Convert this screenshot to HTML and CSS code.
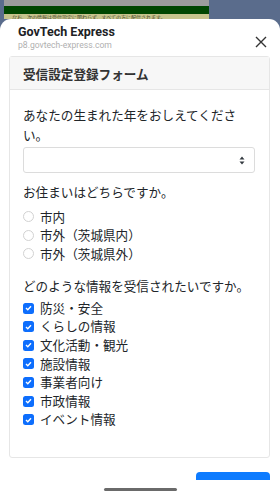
FILE: index.html
```html
<!DOCTYPE html>
<html lang="ja">
<head>
<meta charset="utf-8">
<link rel="stylesheet" href="styles.css">
</head>
<body>
<div class="screen">
  <div class="behind">
    <div class="page-strip">
      <div class="strip-gray"></div>
      <div class="strip-green"></div>
      <div class="strip-yellow"><span>なお、次の情報は受信設定に関わらず、すべての方に配信されます。</span></div>
    </div>
  </div>
  <div class="sheet">
    <div class="sheet-content">
      <div class="sheet-header">
        <div class="site">
          <div class="site-name">GovTech Express</div>
          <div class="site-url">p8.govtech-express.com</div>
        </div>
        <svg class="close" width="12" height="12" viewBox="0 0 12 12"><path d="M1 1L11 11M11 1L1 11" stroke="#333" stroke-width="1.4" fill="none"/></svg>
      </div>
      <div class="card">
        <div class="card-header">受信設定登録フォーム</div>
        <div class="card-body">
          <div class="q">あなたの生まれた年をおしえてください。</div>
          <div class="select">
            <svg width="6" height="9" viewBox="0 0 6 9"><path d="M3 0.5L5.5 3.5H0.5Z M3 8.5L5.5 5.5H0.5Z" fill="#343a40"/></svg>
          </div>
          <div class="q q-gap">お住まいはどちらですか。</div>
          <div class="options radios">
            <div class="opt"><span class="radio"></span><span>市内</span></div>
            <div class="opt"><span class="radio"></span><span>市外（茨城県内）</span></div>
            <div class="opt"><span class="radio"></span><span>市外（茨城県外）</span></div>
          </div>
          <div class="q q-gap2">どのような情報を受信されたいですか。</div>
          <div class="options checks">
            <div class="opt"><span class="check"><svg width="7" height="6" viewBox="0 0 7 6"><path d="M1 3L2.8 4.8L6 1.2" stroke="#fff" stroke-width="1.4" fill="none"/></svg></span><span>防災・安全</span></div>
            <div class="opt"><span class="check"><svg width="7" height="6" viewBox="0 0 7 6"><path d="M1 3L2.8 4.8L6 1.2" stroke="#fff" stroke-width="1.4" fill="none"/></svg></span><span>くらしの情報</span></div>
            <div class="opt"><span class="check"><svg width="7" height="6" viewBox="0 0 7 6"><path d="M1 3L2.8 4.8L6 1.2" stroke="#fff" stroke-width="1.4" fill="none"/></svg></span><span>文化活動・観光</span></div>
            <div class="opt"><span class="check"><svg width="7" height="6" viewBox="0 0 7 6"><path d="M1 3L2.8 4.8L6 1.2" stroke="#fff" stroke-width="1.4" fill="none"/></svg></span><span>施設情報</span></div>
            <div class="opt"><span class="check"><svg width="7" height="6" viewBox="0 0 7 6"><path d="M1 3L2.8 4.8L6 1.2" stroke="#fff" stroke-width="1.4" fill="none"/></svg></span><span>事業者向け</span></div>
            <div class="opt"><span class="check"><svg width="7" height="6" viewBox="0 0 7 6"><path d="M1 3L2.8 4.8L6 1.2" stroke="#fff" stroke-width="1.4" fill="none"/></svg></span><span>市政情報</span></div>
            <div class="opt"><span class="check"><svg width="7" height="6" viewBox="0 0 7 6"><path d="M1 3L2.8 4.8L6 1.2" stroke="#fff" stroke-width="1.4" fill="none"/></svg></span><span>イベント情報</span></div>
          </div>
        </div>
      </div>
      <div class="actions">
        <div class="btn"></div>
      </div>
    </div>
    <div class="bottom-bar"><div class="home-indicator"></div></div>
  </div>
</div>
</body>
</html>
```
FILE: styles.css
```css
* { box-sizing: border-box; }
html, body { margin: 0; padding: 0; }
body {
  width: 280px;
  height: 497px;
  overflow: hidden;
  background: #5a6c8c;
  font-family: "Noto Sans CJK JP", "Noto Sans", sans-serif;
  color: #212529;
}
.screen { display: flex; flex-direction: column; height: 497px; }
.behind { height: 19px; overflow: hidden; flex: none; }
.page-strip { margin-left: 4px; width: 205px; display: flex; flex-direction: column; }
.strip-gray { height: 6px; background: #9c9c9c; }
.strip-green { height: 8px; background: #004600; }
.strip-yellow {
  height: 12px;
  background: #c6c48c;
  font-size: 5px;
  line-height: 6px;
  color: #4a4a30;
  white-space: nowrap;
  overflow: hidden;
  padding-left: 8px;
}
.sheet {
  flex: 1;
  background: #fff;
  border-radius: 11px 11px 0 0;
  display: flex;
  flex-direction: column;
  overflow: hidden;
}
.sheet-content { height: 461px; overflow: hidden; flex: none; }
.sheet-header {
  display: flex;
  justify-content: space-between;
  align-items: flex-start;
  padding: 5px 13px 0 18px;
}
.site-name {
  font-family: Roboto, "Noto Sans", sans-serif;
  font-weight: 700;
  font-size: 12.5px;
  line-height: 16px;
  color: #202124;
}
.site-url {
  font-family: Roboto, "Noto Sans", sans-serif;
  font-size: 8.6px;
  line-height: 11px;
  color: #b0b0b0;
}
.close { margin-top: 12px; }
.card {
  margin: 5px 10px 0 9px;
  border: 1px solid #e6e6e6;
  border-radius: 3px;
}
.card-header {
  background: #f7f7f7;
  border-bottom: 1px solid #e6e6e6;
  padding: 7px 13px 6px;
  font-size: 12.6px;
  line-height: 19px;
  font-weight: 700;
  color: #333;
}
.card-body {
  padding: 15px 14px 28px 13px;
  font-size: 12.6px;
}
.q { line-height: 19.5px; }
.q-gap { margin-top: 9px; }
.q-gap2 { margin-top: 13px; }
.select {
  margin-top: 3px;
  height: 26px;
  border: 1px solid #dcdcdc;
  border-radius: 3px;
  display: flex;
  align-items: center;
  justify-content: flex-end;
  padding-right: 9px;
}
.options { display: flex; flex-direction: column; }
.radios { margin-top: 6px; }
.checks { margin-top: 3px; }
.opt {
  display: flex;
  align-items: center;
  gap: 6px;
  height: 18.6px;
  line-height: 18.6px;
}
.radio {
  width: 11px; height: 11px;
  border: 1px solid #d2d2d2;
  border-radius: 50%;
  flex: none;
}
.check {
  width: 11px; height: 11px;
  background: #0d6efd;
  border-radius: 2.5px;
  flex: none;
  display: flex;
  align-items: center;
  justify-content: center;
}
.check svg { display: block; }
.actions { display: flex; justify-content: flex-end; padding: 14px 10px 0 0; }
.btn {
  width: 74px;
  height: 30px;
  background: #0d7bff;
  border-radius: 4px;
}
.bottom-bar {
  flex: 1;
  background: #fff;
  display: flex;
  justify-content: center;
  padding-top: 8px;
}
.home-indicator { width: 73px; height: 3px; border-radius: 2px; background: #6a6a6a; }
```
